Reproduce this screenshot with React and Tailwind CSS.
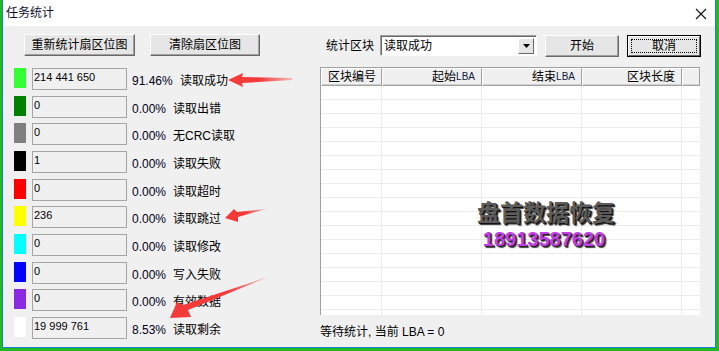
import React from "react";

const rows = [
  { c: "bg-[#33ff33]", v: "214 441 650", p: "91.46%", l: "读取成功", first: true },
  { c: "bg-[#008000]", v: "0", p: "0.00%", l: "读取出错" },
  { c: "bg-[#808080]", v: "0", p: "0.00%", l: "无CRC读取" },
  { c: "bg-[#000000]", v: "1", p: "0.00%", l: "读取失败" },
  { c: "bg-[#ff0000]", v: "0", p: "0.00%", l: "读取超时" },
  { c: "bg-[#ffff00]", v: "236", p: "0.00%", l: "读取跳过" },
  { c: "bg-[#00ffff]", v: "0", p: "0.00%", l: "读取修改" },
  { c: "bg-[#0000ff]", v: "0", p: "0.00%", l: "写入失败" },
  { c: "bg-[#8a2be2]", v: "0", p: "0.00%", l: "有效数据" },
  { c: "bg-[#ffffff]", v: "19 999 761", p: "8.53%", l: "读取剩余" },
];

const cols = [
  { w: "w-[61px]", t: "区块编号", left: true },
  { w: "w-[100px]", t: "起始", lba: true },
  { w: "w-[100px]", t: "结束", lba: true },
  { w: "w-[100px]", t: "区块长度" },
  { w: "flex-1", t: "" },
];

function Btn({ className = "", children }) {
  return (
    <div
      className={
        "flex items-center justify-center bg-[#e6e6e6] border border-t-white border-l-white border-r-[#696969] border-b-[#696969] shadow-[inset_-1px_-1px_0_#a0a0a0] text-[12px] leading-[16px] text-black " +
        className
      }
    >
      {children}
    </div>
  );
}

export default function App() {
  return (
    <div className="relative w-[719px] h-[351px] overflow-hidden bg-[#22b922] pl-[2px] pr-[3px] pb-[3px] font-[family-name:'Liberation_Sans','Noto_Sans_CJK_SC',sans-serif] text-black">
      <div className="flex flex-col h-full border-l border-r border-b border-[#1c7fd4]">
        {/* title bar */}
        <div className="flex items-center justify-between h-[26px] bg-white pl-[3px] pr-[8px]">
          <span className="text-[12px] leading-[16px] text-[#101030]">任务统计</span>
          <svg width="12" height="12" viewBox="0 0 12 12" className="mt-[1px]">
            <path d="M1 1 L11 11 M11 1 L1 11" stroke="#111" strokeWidth="1.1" fill="none" />
          </svg>
        </div>
        {/* client */}
        <div className="flex flex-1 bg-[#f0f0f0]">
          {/* left column */}
          <div className="w-[317px] pl-[11px] pt-[8px] flex flex-col">
            <div className="flex ml-[10px] gap-[15px]">
              <Btn className="w-[111px] h-[22px]">重新统计扇区位图</Btn>
              <Btn className="w-[110px] h-[22px]">清除扇区位图</Btn>
            </div>
            <div className="mt-[12px] grid grid-rows-[repeat(10,27.67px)]">
              {rows.map((r, i) => (
                <div key={i} className="flex items-start">
                  <div className={"w-[12px] h-[20px] " + r.c} />
                  <div className="ml-[6px] w-[95px] h-[22px] border border-[#a5a5a5] bg-[#f0f0f0] pl-[1px] pt-[2px] text-[11px] leading-[13px]">
                    {r.v}
                  </div>
                  <div className="ml-[5px] w-[41px] mt-[5px] text-[12px] leading-[16px] text-[#000020]">{r.p}</div>
                  <div className={"mt-[5px] text-[12px] leading-[16px] " + (r.first ? "ml-[7px]" : "")}>{r.l}</div>
                </div>
              ))}
            </div>
          </div>
          {/* right column */}
          <div className="flex-1 pt-[9px] flex flex-col">
            <div className="flex items-start h-[23px]">
              <div className="ml-[6px] w-[54px] mt-[3px] text-[12px] leading-[16px]">统计区块</div>
              <div className="w-[157px] h-[21px] border border-t-[#a0a0a0] border-l-[#a0a0a0] border-r-white border-b-white shadow-[inset_1px_1px_0_#696969] bg-white flex items-center pl-[3px] pr-[2px]">
                <span className="flex-1 text-[12px] leading-[16px]">读取成功</span>
                <div className="w-[16px] h-[16px] bg-[#e6e6e6] border border-t-white border-l-white border-r-[#696969] border-b-[#696969] flex items-center justify-center">
                  <svg width="7" height="4" viewBox="0 0 7 4">
                    <path d="M0 0 H7 L3.5 4 Z" fill="#000" />
                  </svg>
                </div>
              </div>
              <Btn className="ml-[8px] w-[74px] h-[22px]">开始</Btn>
              <div className="ml-[8px] w-[74px] h-[22px] border border-black">
                <div className="w-full h-full bg-[#e6e6e6] border border-t-white border-l-white border-r-[#696969] border-b-[#696969] p-[2px]">
                  <div className="w-full h-full border border-dotted border-black flex items-center justify-center text-[12px] leading-[16px]">
                    取消
                  </div>
                </div>
              </div>
            </div>
            {/* list */}
            <div className="relative mt-[9px] w-[380px] h-[248px] bg-white border-l border-t border-[#a0a0a0] overflow-hidden flex flex-col">
              <div className="flex h-[18px] shrink-0">
                {cols.map((c, i) => (
                  <div
                    key={i}
                    className={
                      "h-full bg-[#f0f0f0] border border-t-white border-l-white border-r-[#a0a0a0] border-b-[#a0a0a0] shadow-[inset_0_-1px_0_#d0d0d0] flex items-center text-[12px] leading-[16px] " +
                      c.w +
                      (c.left ? " pl-[6px]" : " justify-end pr-[6px]")
                    }
                  >
                    {c.t}
                    {c.lba && <span className="text-[10px] text-[#102040]">LBA</span>}
                  </div>
                ))}
              </div>
              {Array.from({ length: 17 }).map((_, i) => (
                <div key={i} className="flex h-[14px] shrink-0 border-b border-[#ececec]">
                  <div className="w-[61px] h-full border-r border-[#ececec]" />
                  <div className="w-[100px] h-full border-r border-[#ececec]" />
                  <div className="w-[100px] h-full border-r border-[#ececec]" />
                  <div className="w-[100px] h-full border-r border-[#ececec]" />
                  <div className="flex-1 h-full" />
                </div>
              ))}
              <div className="absolute left-[150px] top-[131px] w-[150px] flex flex-col items-center">
                <div className="text-[23px] leading-[24px] font-bold text-[#5c5c5c] [text-shadow:1px_1px_0_#111,2px_2px_1px_#333] font-[family-name:'Noto_Sans_CJK_SC',sans-serif]">
                  盘首数据恢复
                </div>
                <div className="mt-[6px] text-[20px] leading-[20px] font-bold text-[#c33ee6] [text-shadow:1px_1px_0_#222,2px_2px_1px_#444] font-[family-name:'Liberation_Sans',sans-serif] -ml-[4px]">
                  18913587620
                </div>
              </div>
            </div>
            <div className="mt-[9px] text-[12px] leading-[16px]">等待统计, 当前 LBA = 0</div>
          </div>
        </div>
      </div>
      {/* annotation arrows */}
      <svg className="absolute left-0 top-0 pointer-events-none" width="719" height="351" viewBox="0 0 719 351">
        <defs>
          <linearGradient id="g1" x1="228" y1="0" x2="292" y2="0" gradientUnits="userSpaceOnUse">
            <stop offset="0.5" stopColor="#f53a3a" />
            <stop offset="1" stopColor="#f53a3a" stopOpacity="0.3" />
          </linearGradient>
          <linearGradient id="g2" x1="225" y1="218" x2="266" y2="209" gradientUnits="userSpaceOnUse">
            <stop offset="0.5" stopColor="#f53a3a" />
            <stop offset="1" stopColor="#f53a3a" stopOpacity="0.3" />
          </linearGradient>
          <linearGradient id="g3" x1="170" y1="318" x2="268" y2="277" gradientUnits="userSpaceOnUse">
            <stop offset="0.6" stopColor="#f53a3a" />
            <stop offset="1" stopColor="#f53a3a" stopOpacity="0.3" />
          </linearGradient>
        </defs>
        <polygon points="228,80 243,73 242,77 292,78 292,80 242,83 243,87" fill="url(#g1)" />
        <polygon points="225,218 234,209 237,212 266,209 238,217 238,222" fill="url(#g2)" />
        <polygon points="170,318 177,302 183,305 268,277 188,310 191,317" fill="url(#g3)" />
      </svg>
    </div>
  );
}
